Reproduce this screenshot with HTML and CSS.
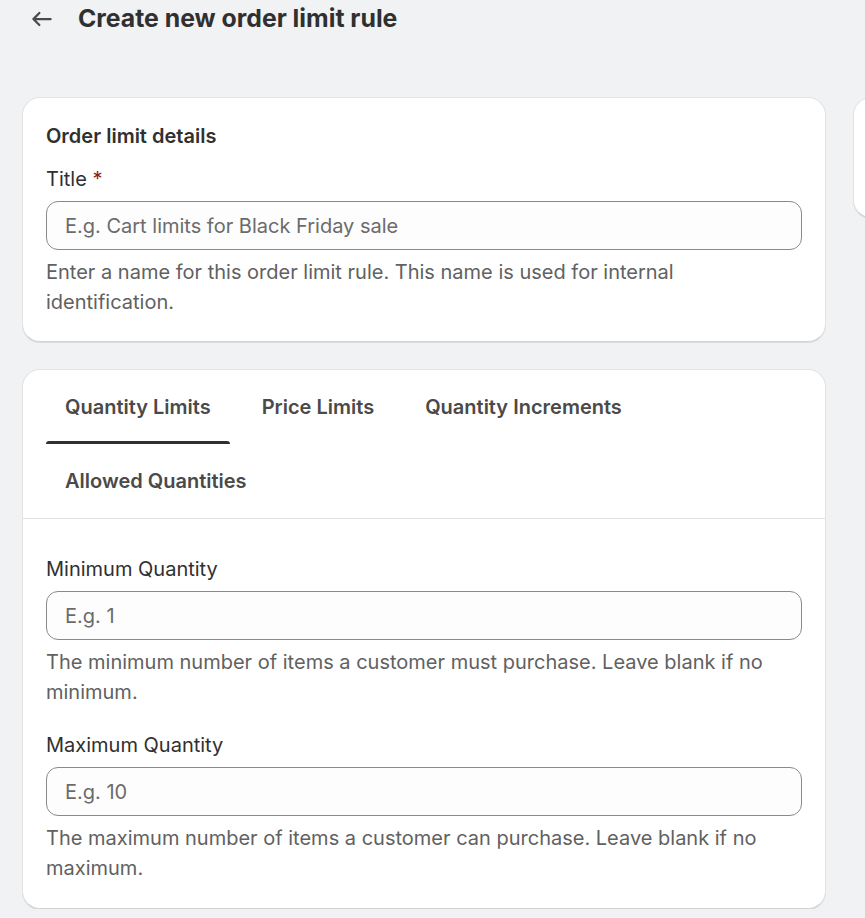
FILE: index.html
```html
<!DOCTYPE html>
<html lang="en">
<head>
    <meta charset="UTF-8">
    <meta name="viewport" content="width=device-width, initial-scale=1.0">
    <title>Create new order limit rule</title>
    <link rel="stylesheet" href="styles.css">
</head>
<body>
    <div class="page">
        <div class="page-header">
            <button class="back-button" type="button" aria-label="Back">
                <svg viewBox="0 0 20 20" width="30" height="30" fill="#4a4a4a">
                    <path d="M16.5 10a.75.75 0 0 1-.75.75h-9.69l2.72 2.72a.75.75 0 0 1-1.06 1.06l-4-4a.75.75 0 0 1 0-1.06l4-4a.75.75 0 1 1 1.06 1.06l-2.72 2.72h9.69a.75.75 0 0 1 .75.75Z"/>
                </svg>
            </button>
            <h1>Create new order limit rule</h1>
        </div>

        <div class="layout">
            <div class="primary">
                <div class="card card-padded">
                    <h2>Order limit details</h2>
                    <div class="field">
                        <label for="title">Title <span class="required">*</span></label>
                        <input type="text" id="title" placeholder="E.g. Cart limits for Black Friday sale">
                        <p class="help">Enter a name for this order limit rule. This name is used for internal identification.</p>
                    </div>
                </div>

                <div class="card">
                    <div class="tabs">
                        <button class="tab selected" type="button">Quantity Limits</button>
                        <button class="tab" type="button">Price Limits</button>
                        <button class="tab" type="button">Quantity Increments</button>
                        <button class="tab" type="button">Allowed Quantities</button>
                    </div>
                    <div class="tab-panel">
                        <div class="field">
                            <label for="minQty">Minimum Quantity</label>
                            <input type="text" id="minQty" placeholder="E.g. 1">
                            <p class="help">The minimum number of items a customer must purchase. Leave blank if no minimum.</p>
                        </div>
                        <div class="field">
                            <label for="maxQty">Maximum Quantity</label>
                            <input type="text" id="maxQty" placeholder="E.g. 10">
                            <p class="help">The maximum number of items a customer can purchase. Leave blank if no maximum.</p>
                        </div>
                    </div>
                </div>
            </div>

            <div class="secondary">
                <div class="card card-padded summary"></div>
            </div>
        </div>
    </div>
</body>
</html>
```

FILE: styles.css
```css
html, body {
    overflow: hidden;
}
body {
    margin: 0;
    background-color: #f1f2f4;
    color: #303030;
    font-family: Inter, 'Noto Sans', sans-serif;
    font-size: 20px;
    line-height: 30px;
}
.page {
    padding-left: 22px;
}
.page-header {
    display: flex;
    align-items: center;
    gap: 21px;
    height: 36px;
    padding-left: 5px;
}
.back-button {
    display: flex;
    padding: 0;
    border: none;
    background: none;
    cursor: pointer;
    margin-top: 2px;
}
h1 {
    margin: 0;
    font-size: 24.8px;
    font-weight: 700;
    line-height: 36px;
}
.layout {
    display: flex;
    gap: 27px;
    margin-top: 61px;
    width: 1230px;
}
.primary {
    display: flex;
    flex-direction: column;
    gap: 27px;
    width: 804px;
    flex-shrink: 0;
}
.secondary {
    width: 400px;
    flex-shrink: 0;
}
.card {
    background-color: #fff;
    border: 1px solid #e3e3e3;
    border-bottom-color: #d4d4d4;
    border-radius: 18px;
    box-shadow: 0 1px 0 rgba(26, 26, 26, 0.1);
}
.card-padded {
    padding: 23px 23px 24px;
}
.summary {
    height: 72px;
}
h2 {
    margin: 0 0 13px;
    font-size: 20px;
    font-weight: 600;
    line-height: 30px;
}
.field {
    display: flex;
    flex-direction: column;
}
.field + .field {
    margin-top: 23px;
}
label {
    margin-bottom: 7px;
}
.required {
    color: #8e1f0b;
}
input {
    height: 49px;
    padding: 0 18px;
    border: 1px solid #8a8a8a;
    border-radius: 12px;
    background-color: #fdfdfd;
    color: #303030;
    font-family: inherit;
    font-size: 20px;
    box-sizing: border-box;
}
input::placeholder {
    color: #6b6b6b;
}
.help {
    margin: 7px 0 0;
    color: #616161;
}
.tabs {
    display: flex;
    flex-wrap: wrap;
    column-gap: 13px;
    padding: 0 23px;
    border-bottom: 1px solid #e3e3e3;
}
.tab {
    position: relative;
    padding: 22px 19px;
    border: none;
    background: none;
    color: #4a4a4a;
    font-family: inherit;
    font-size: 20px;
    font-weight: 600;
    line-height: 30px;
    cursor: pointer;
}
.tab.selected::after {
    content: "";
    position: absolute;
    left: 0;
    right: 0;
    bottom: 0;
    height: 3px;
    border-radius: 3px 3px 0 0;
    background-color: #303030;
}
.tab-panel {
    padding: 35px 23px 25px;
}
```
